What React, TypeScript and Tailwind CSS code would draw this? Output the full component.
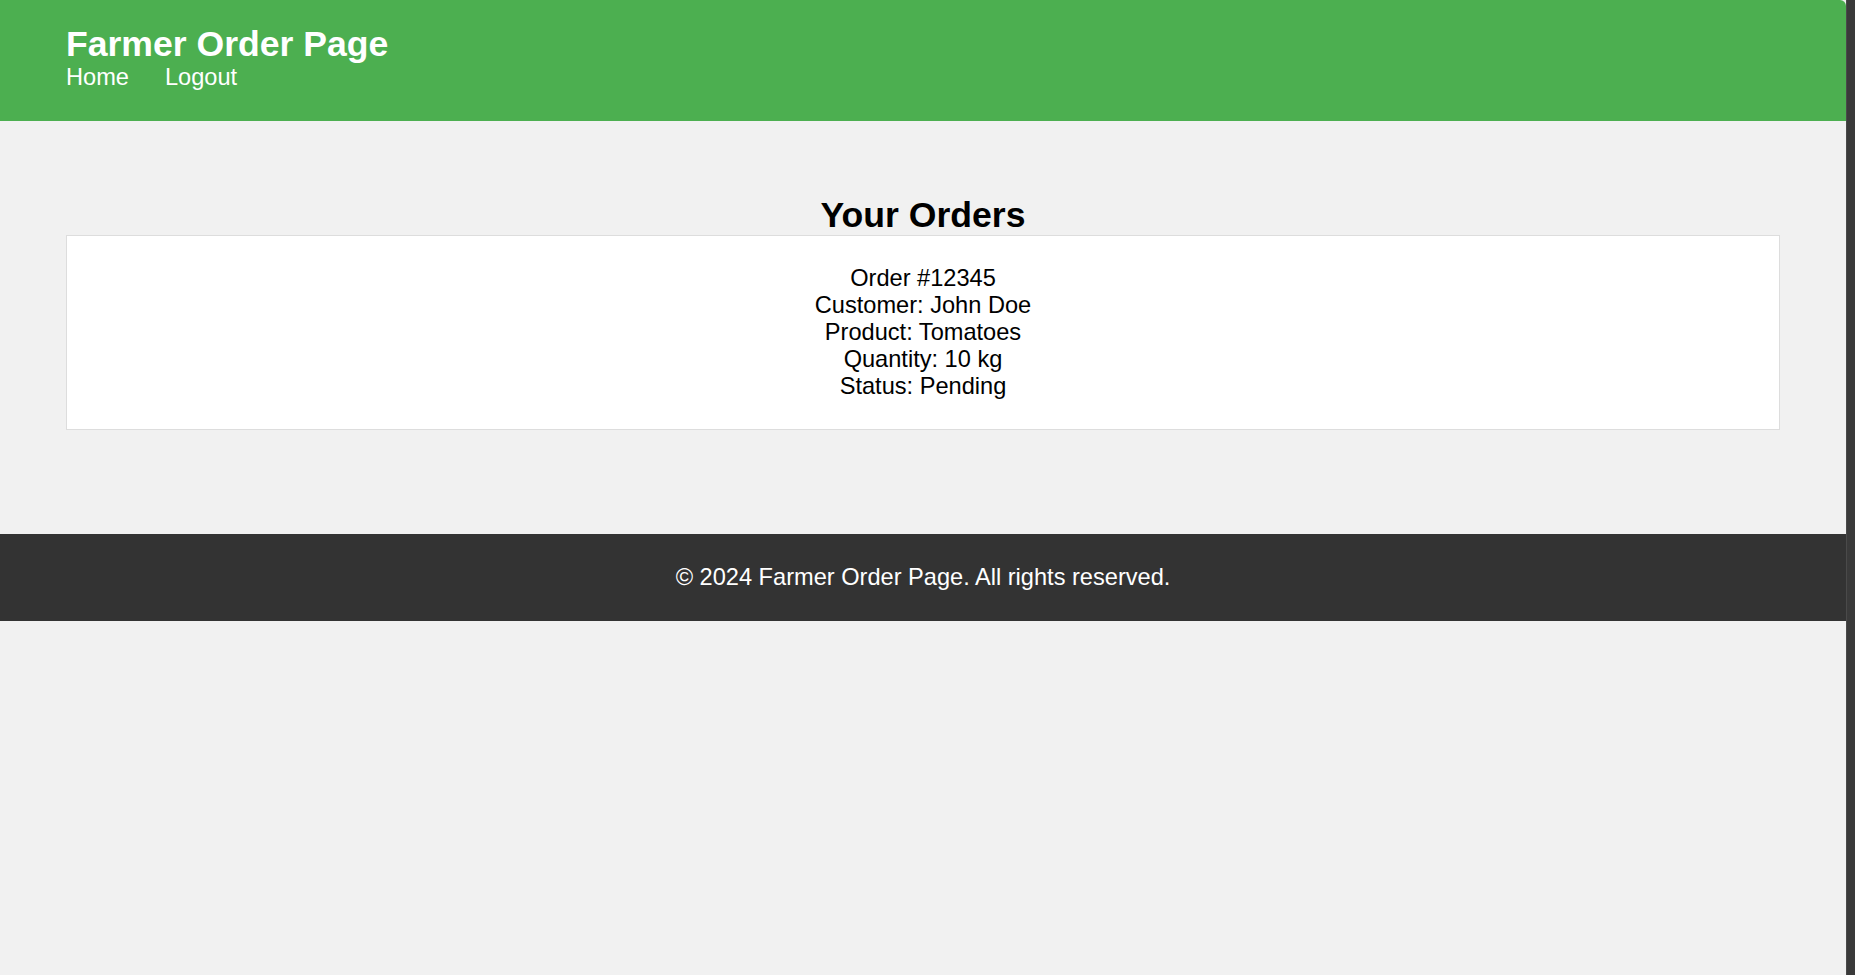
const order = [
  "Order #12345",
  "Customer: John Doe",
  "Product: Tomatoes",
  "Quantity: 10 kg",
  "Status: Pending",
];

export default function App() {
  return (
    <div
      className="flex min-h-screen bg-[#3a3a3a]"
      style={{ fontFamily: '"Liberation Sans", Arial, sans-serif' }}
    >
      <div className="flex w-[1846px] flex-col bg-[#f1f1f1]">
        {/* Header */}
        <header className="rounded-tr-[6px] bg-[#4caf50] px-[66px] pt-[24px] pb-[31px] text-white">
          <h1 className="text-[35.6px] font-bold leading-[40px]">Farmer Order Page</h1>
          <nav className="flex gap-[36px] text-[23.6px] leading-[26px]">
            <a href="#">Home</a>
            <a href="#">Logout</a>
          </nav>
        </header>

        {/* Orders */}
        <main className="px-[66px] pt-[74px] pb-[104px]">
          <h2 className="text-center text-[35.6px] font-bold leading-[40px] text-black">
            Your Orders
          </h2>
          <div className="border border-[#dddddd] bg-white py-[29px] text-center text-[23.6px] leading-[27px] text-black">
            {order.map((line) => (
              <p key={line}>{line}</p>
            ))}
          </div>
        </main>

        {/* Footer */}
        <footer className="flex h-[87px] items-center justify-center bg-[#333333] text-[23.6px] text-white">
          © 2024 Farmer Order Page. All rights reserved.
        </footer>
      </div>
      <div className="flex-1 border-l border-[#4a4a4a]" />
    </div>
  );
}
